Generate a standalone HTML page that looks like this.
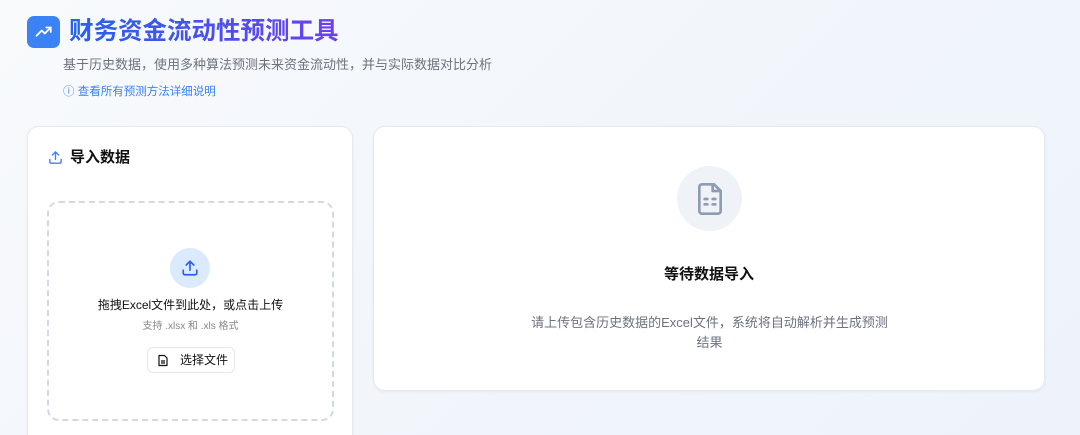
<!DOCTYPE html>
<html style="overflow:hidden;height:435px"><head><meta charset="utf-8"><style>
*{margin:0;padding:0;box-sizing:border-box}
body{width:1080px;height:435px;overflow:hidden;background:linear-gradient(135deg,#f8fafc 0%,#f1f5fb 60%,#eef3fb 100%);font-family:"Liberation Sans","Noto Sans CJK SC",sans-serif;position:relative}
.abs{position:absolute}
.logo{left:27px;top:16px;width:33px;height:32px;border-radius:7px;background:#3b82f6;display:flex;align-items:center;justify-content:center}
.title{left:69px;top:15px;font-size:24.5px;font-weight:bold;line-height:34px;background:linear-gradient(90deg,#2563eb,#6d3ff0);-webkit-background-clip:text;color:transparent}
.sub{left:63px;top:55px;font-size:13px;color:#6b7280;line-height:20px}
.link{left:63px;top:84px;font-size:11.5px;color:#3b82f6;line-height:16px}
.card{background:#fff;border-radius:12px;border:1px solid #e5e9f0;box-shadow:0 1px 3px rgba(0,0,0,.05)}
</style></head><body>
<div class="abs logo"><svg width="18" height="18" viewBox="0 0 24 24" fill="none" stroke="#fff" stroke-width="2.4" stroke-linecap="round" stroke-linejoin="round"><path d="M2 17l7-7 4 4 8-8"/><path d="M15 6h6v6"/></svg></div>
<div class="abs title">财务资金流动性预测工具</div>
<div class="abs sub">基于历史数据，使用多种算法预测未来资金流动性，并与实际数据对比分析</div>
<div class="abs link">ⓘ 查看所有预测方法详细说明</div>

<div class="abs card" style="left:27px;top:126px;width:326px;height:330px"></div>
<div class="abs" style="left:48px;top:150px"><svg width="15" height="15" viewBox="0 0 24 24" fill="none" stroke="#3b82f6" stroke-width="2.2" stroke-linecap="round" stroke-linejoin="round"><path d="M12 15V3M7 8l5-5 5 5M3 15v4a2 2 0 002 2h14a2 2 0 002-2v-4"/></svg></div>
<div class="abs" style="left:70px;top:148px;font-size:15px;font-weight:bold;color:#111;line-height:20px">导入数据</div>
<div class="abs" style="left:47px;top:201px;width:287px;height:220px;border:2px dashed #d3d9e3;border-radius:12px"></div>
<div class="abs" style="left:170px;top:248px;width:40px;height:40px;border-radius:50%;background:#dbeafe;display:flex;align-items:center;justify-content:center"><svg width="18" height="18" viewBox="0 0 24 24" fill="none" stroke="#2563eb" stroke-width="2.2" stroke-linecap="round" stroke-linejoin="round"><path d="M12 15V3M7 8l5-5 5 5M3 15v4a2 2 0 002 2h14a2 2 0 002-2v-4"/></svg></div>
<div class="abs" style="left:47px;top:297px;width:287px;text-align:center;font-size:12px;color:#111;line-height:17px">拖拽Excel文件到此处，或点击上传</div>
<div class="abs" style="left:47px;top:320px;width:287px;text-align:center;font-size:10px;color:#888;line-height:14px">支持 .xlsx 和 .xls 格式</div>
<div class="abs" style="left:147px;top:347px;width:88px;height:26px;border:1px solid #e5e7eb;border-radius:6px;background:#fff;font-size:12px;color:#111;line-height:24px"><svg class="abs" style="left:9px;top:6px" width="12" height="13" viewBox="0 0 24 24" fill="none" stroke="#111" stroke-width="2.4" stroke-linejoin="round"><path d="M6 2h9l5 5v15H4V2z"/><path d="M8 13h8M8 17h8"/></svg><span class="abs" style="left:32px;top:0">选择文件</span></div>

<div class="abs card" style="left:373px;top:126px;width:672px;height:265px"></div>
<div class="abs" style="left:677px;top:166px;width:65px;height:65px;border-radius:50%;background:#eff2f7;display:flex;align-items:center;justify-content:center"><svg width="32" height="36" viewBox="0 0 24 26" fill="none" stroke="#8f9db3" stroke-width="2" stroke-linecap="round" stroke-linejoin="round"><path d="M6 2h9l5 5v15a2 2 0 01-2 2H6a2 2 0 01-2-2V4a2 2 0 012-2z"/><path d="M14 2v5h6"/><path d="M8 13h2M14 13h2M8 17h2M14 17h2"/></svg></div>
<div class="abs" style="left:373px;top:265px;width:672px;text-align:center;font-size:15px;font-weight:bold;color:#111;line-height:20px">等待数据导入</div>
<div class="abs" style="left:528px;top:313px;width:363px;text-align:center;font-size:13px;color:#6b7280;line-height:20px">请上传包含历史数据的Excel文件，系统将自动解析并生成预测结果</div>
</body></html>
